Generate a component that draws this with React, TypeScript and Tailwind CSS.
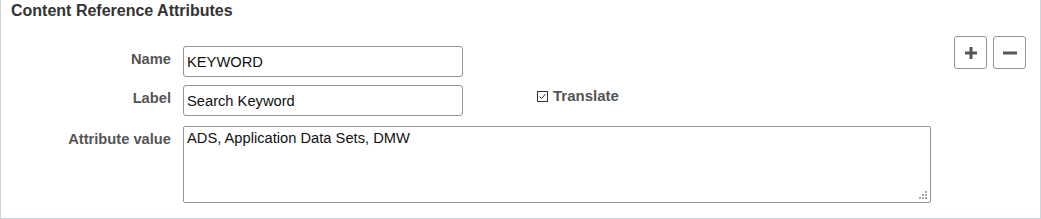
import React from 'react';

const font = "font-['Liberation_Sans',Arial,sans-serif]";

const ResizeDots = () => (
    <svg width="10" height="10" viewBox="0 0 10 10" className="absolute right-[3px] bottom-[3px]">
        <rect x="7" y="1" width="2" height="2" fill="#a3a8ad" />
        <rect x="4" y="4" width="2" height="2" fill="#a3a8ad" />
        <rect x="7" y="4" width="2" height="2" fill="#a3a8ad" />
        <rect x="1" y="7" width="2" height="2" fill="#a3a8ad" />
        <rect x="4" y="7" width="2" height="2" fill="#a3a8ad" />
        <rect x="7" y="7" width="2" height="2" fill="#a3a8ad" />
    </svg>
);

const Field: React.FC<{ label: string; children: React.ReactNode }> = ({ label, children }) => (
    <div className="flex items-start gap-[12px]">
        <div className="w-[170px] pt-[4px] text-right text-[14.7px] leading-[18px] font-bold text-[#555]">{label}</div>
        {children}
    </div>
);

export default function App() {
    return (
        <div className={`w-[1041px] h-[219px] bg-white border-x border-b border-[#cfd4d9] ${font}`}>
            {/* Header */}
            <div className="pl-[10px] pt-[2px] text-[16px] leading-[18px] font-bold text-[#333]">
                Content Reference Attributes
            </div>

            <div className="flex justify-between pt-[16px] pr-[14px]">
                {/* Form */}
                <div className="mt-[10px] flex flex-col">
                    <Field label="Name">
                        <input
                            readOnly
                            value="KEYWORD"
                            className="w-[280px] h-[31px] px-[3px] border border-[#8f959b] rounded-[3px] text-[14.7px] text-[#111] outline-none bg-white"
                        />
                    </Field>
                    <div className="mt-[8px]">
                        <Field label="Label">
                            <input
                                readOnly
                                value="Search Keyword"
                                className="w-[280px] h-[31px] px-[3px] border border-[#8f959b] rounded-[3px] text-[14.7px] text-[#111] outline-none bg-white"
                            />
                            <label className="ml-[62px] mt-[2px] flex items-center gap-[5px] text-[15px] leading-[18px] font-bold text-[#555]">
                                <svg width="11" height="11" viewBox="0 0 11 11">
                                    <rect x="0.5" y="0.5" width="10" height="10" fill="white" stroke="#333" />
                                    <path d="M2.5 5.5 L4.5 7.5 L8.5 3" fill="none" stroke="#333" strokeWidth="1" />
                                </svg>
                                Translate
                            </label>
                        </Field>
                    </div>
                    <div className="mt-[10px]">
                        <Field label="Attribute value">
                            <div className="relative">
                                <textarea
                                    readOnly
                                    value="ADS, Application Data Sets, DMW"
                                    className="block w-[748px] h-[77px] px-[3px] py-[2px] border border-[#8f959b] rounded-[2px] text-[14.7px] leading-[18px] text-[#111] outline-none resize-none bg-white"
                                />
                                <ResizeDots />
                            </div>
                        </Field>
                    </div>
                </div>

                {/* Add / remove */}
                <div className="flex gap-[6px]">
                    <button className="w-[33px] h-[33px] flex items-center justify-center border border-[#8f959b] rounded-[3px] bg-white">
                        <svg width="14" height="14" viewBox="0 0 14 14">
                            <path d="M7 1v12M1 7h12" stroke="#555" strokeWidth="3" />
                        </svg>
                    </button>
                    <button className="w-[33px] h-[33px] flex items-center justify-center border border-[#8f959b] rounded-[3px] bg-white">
                        <svg width="16" height="14" viewBox="0 0 16 14">
                            <path d="M1 7h14" stroke="#555" strokeWidth="3" />
                        </svg>
                    </button>
                </div>
            </div>
        </div>
    );
}
